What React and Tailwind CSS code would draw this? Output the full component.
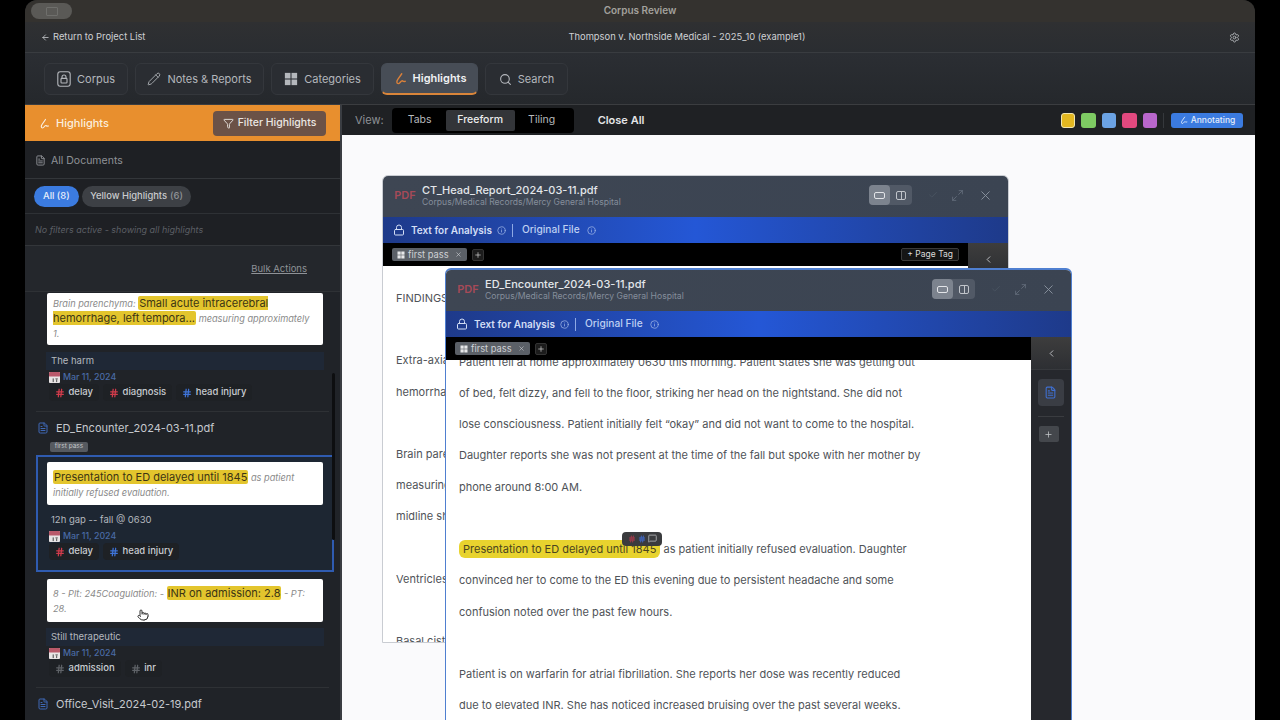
import React from 'react';
import { ArrowLeft, Settings, Lock, Pencil, Search, Filter, FileText, Info, X, Plus, Check, Maximize2, ChevronLeft, Pointer, MessageSquare, Hash } from 'lucide-react';

const HighlightIcon = ({ className }) => (
  <svg viewBox="0 0 24 24" fill="none" stroke="currentColor" strokeWidth="2.4" strokeLinecap="round" strokeLinejoin="round" className={className}>
    <path d="M15 3 8 13c-2 3-2 7 1 7 3 0 4-5 7-5 1 0 1 2 5 1" />
  </svg>
);

const GridIcon = ({ className }) => (
  <svg viewBox="0 0 16 16" fill="currentColor" className={className}>
    <rect x="1" y="1" width="6.4" height="6.4" />
    <rect x="8.6" y="1" width="6.4" height="6.4" />
    <rect x="1" y="8.6" width="6.4" height="6.4" />
    <rect x="8.6" y="8.6" width="6.4" height="6.4" />
  </svg>
);

const CorpusIcon = ({ className }) => (
  <svg viewBox="0 0 14 16" fill="none" stroke="currentColor" strokeWidth="1.1" className={className}>
    <rect x="0.8" y="0.8" width="12.4" height="14.4" rx="2.4" />
    <rect x="4" y="7.4" width="6" height="4.6" rx="0.8" />
    <path d="M5 7.4V6a2 2 0 0 1 4 0v1.4" />
  </svg>
);

const CalendarIcon = () => (
  <svg viewBox="0 0 12 12" className="h-[11px] w-[11px] shrink-0">
    <rect x="0" y="0" width="12" height="12" rx="1" fill="#e8e4e4" />
    <rect x="0" y="0" width="12" height="5" rx="1" fill="#b9596a" />
    <rect x="4" y="7" width="1.2" height="4" fill="#555" />
    <rect x="7" y="7" width="2.6" height="1" fill="#555" />
    <rect x="7.8" y="8" width="1.1" height="3" fill="#555" />
  </svg>
);

const tabs = [
  { label: 'Corpus', icon: <CorpusIcon className="h-[16px] w-[14px]" />, w: 'w-[84px]' },
  { label: 'Notes & Reports', icon: <Pencil className="h-[14px] w-[14px]" strokeWidth={1.5} />, w: 'w-[129px]' },
  { label: 'Categories', icon: <GridIcon className="h-[14px] w-[14px]" />, w: 'w-[103px]' },
  { label: 'Highlights', icon: <HighlightIcon className="h-[14px] w-[14px] text-[#d9803a]" />, w: 'w-[97px]', active: true },
  { label: 'Search', icon: <Search className="h-[13px] w-[13px]" />, w: 'w-[83px]' },
];

const tagColors = { red: 'text-[#d23c4c]', blue: 'text-[#3f74d8]', grey: 'text-[#5f6368]' };

function Tag({ label, color }) {
  return (
    <span className="flex h-[17px] items-center gap-[3.5px] rounded bg-[#1e2125] px-[6px] text-[9.5px] font-medium text-[#c9ccd1]">
      <Hash className={`h-[10px] w-[10px] ${tagColors[color]}`} strokeWidth={3} />
      {label}
    </span>
  );
}

function NoteMeta({ note, tags, noteBg, className }) {
  return (
    <div className={className}>
      <div className={`mx-[10px] flex h-[18px] items-center px-[5px] text-[9.5px] text-[#b4b8be] ${noteBg}`}>{note}</div>
      <div className="ml-[13px] mt-[2px] flex h-[10px] items-center gap-[3px] text-[8.8px] font-medium text-[#4a6ba5]">
        <CalendarIcon />
        Mar 11, 2024
      </div>
      <div className="ml-[13px] mt-[2px] flex gap-[4px]">
        {tags.map((t) => <Tag key={t.label} {...t} />)}
      </div>
    </div>
  );
}

function DocRow({ name }) {
  return (
    <div className="flex h-[20px] items-center gap-[7px] pl-[12px]">
      <FileText className="h-[12px] w-[12px] text-[#3f68b5]" />
      <span className="text-[11px] text-[#c6c9ce]">{name}</span>
    </div>
  );
}

function DocWindow({ className, title, pageTag, children, side }) {
  return (
    <div className={`absolute flex h-[468px] w-[627px] flex-col overflow-hidden rounded-t-md border bg-white ${className}`}>
      <div className="flex h-[41px] shrink-0 items-center bg-gradient-to-r from-[#3e4653] to-[#3b4452] pb-[3px] pl-[10px] pr-[15px]">
        <span className="flex h-[22px] w-[24px] items-center justify-center rounded text-[11px] font-semibold text-[#a64a58]">PDF</span>
        <div className="ml-[5px] flex-1">
          <div className="text-[11px] font-medium leading-[14px] text-[#e3e6ea]">{title}</div>
          <div className="text-[8.6px] leading-[11px] text-[#858e9b]">Corpus/Medical Records/Mercy General Hospital</div>
        </div>
        <div className="flex h-[20px] w-[43px] rounded bg-[#515966]">
          <span className="flex w-[21px] items-center justify-center rounded bg-[#7c838e]">
            <span className="h-[7px] w-[11px] rounded-[2px] border border-[#e2e4e8]" />
          </span>
          <span className="flex flex-1 items-center justify-center">
            <span className="flex h-[9px] w-[10px] justify-center rounded-[2px] border border-[#c0c4ca]">
              <span className="h-full w-px bg-[#c0c4ca]" />
            </span>
          </span>
        </div>
        <Check className="ml-[16px] h-[10px] w-[10px] text-[#4c5563]" />
        <Maximize2 className="ml-[13px] h-[13px] w-[13px] text-[#66707e]" strokeWidth={1.5} />
        <X className="ml-[14px] h-[15px] w-[15px] text-[#8a929e]" strokeWidth={1.5} />
      </div>
      <div className="flex h-[26px] shrink-0 items-center bg-gradient-to-r from-[#1e3a8a] via-[#2457d6] to-[#1e3a8a] pl-[10px] text-[10.2px] font-medium text-[#d3def5]">
        <Lock className="h-[12px] w-[12px]" />
        <span className="ml-[6px] text-[10px] font-semibold">Text for Analysis</span>
        <Info className="ml-[5px] h-[9px] w-[9px] text-[#9db4e6]" />
        <span className="mx-[6px] h-[13px] w-px bg-[#8ea9e4]" />
        <span className="ml-[3px] text-[#bfd0f2]">Original File</span>
        <Info className="ml-[7px] h-[9px] w-[9px] text-[#9db4e6]" />
      </div>
      <div className="flex min-h-0 flex-1">
        <div className="flex min-w-0 flex-1 flex-col">
          <div className="flex h-[23px] shrink-0 items-center bg-black pl-[9px] pr-[9px]">
            <span className="flex h-[13px] items-center gap-[3px] rounded-[2px] bg-[#5b6067] px-[5px] text-[9.3px] text-[#cfd2d6]">
              <GridIcon className="h-[8px] w-[8px] text-[#e6e7e9]" />
              first pass
              <X className="ml-[3px] h-[7px] w-[7px]" />
            </span>
            <span className="ml-[5px] flex h-[12px] w-[12px] items-center justify-center rounded-[2px] border border-[#333] bg-[#1c1c1c]">
              <Plus className="h-[8px] w-[8px] text-[#ddd]" />
            </span>
            {pageTag && (
              <span className="ml-auto flex h-[13px] items-center rounded-[2px] border border-[#3a3a3a] bg-[#151515] px-[5px] text-[8.5px] text-[#dcdcdc]">+ Page Tag</span>
            )}
          </div>
          <div className="min-h-0 flex-1 overflow-hidden text-[11px] leading-[31.3px] text-[#4f5358]">{children}</div>
        </div>
        <div className="flex w-[40px] shrink-0 flex-col items-center bg-[#26282d]">
          <div className="flex h-[33px] w-full items-center justify-center border-b border-[#37393d] bg-gradient-to-b from-[#3d3d3d] to-[#2d2f33]">
            <ChevronLeft className="h-[11px] w-[11px] text-[#c4c6c9]" />
          </div>
          {side && (
            <>
              <span className="mr-[1px] mt-[9px] flex h-[27px] w-[26px] items-center justify-center rounded bg-[#3a3d44]">
                <FileText className="h-[13px] w-[13px] text-[#3f6fd0]" />
              </span>
              <span className="mt-[10px] h-px w-[26px] bg-[#3a3c40]" />
              <span className="mr-[5px] mt-[9px] flex h-[16px] w-[20px] items-center justify-center rounded-[2px] bg-[#44474c]">
                <Plus className="h-[9px] w-[9px] text-[#c6c8cb]" />
              </span>
            </>
          )}
        </div>
      </div>
    </div>
  );
}

const Mark = ({ children }) => (
  <span className="rounded-[2px] bg-[#e3c52d] px-[1px] text-[11px] not-italic text-[#3c3514]">{children}</span>
);

export default function App() {
  return (
    <div className="h-[720px] w-[1280px] overflow-hidden bg-black px-[25px] font-['Inter',sans-serif]">
      <div className="flex h-full flex-col overflow-hidden rounded-t-xl bg-[#1f2124]">
        {/* title bar */}
        <div className="relative flex h-[22px] shrink-0 items-center justify-center bg-[#34322f] pb-[2px] text-[10px] font-semibold text-[#a3a19d]">
          <span className="absolute left-[6px] top-[3px] flex h-[16px] w-[41px] items-center justify-center rounded-full bg-[#5a5956]">
            <span className="h-[9px] w-[12px] rounded-[1px] border border-[#6f6f6c]" />
          </span>
          Corpus Review
        </div>

        {/* project header */}
        <div className="flex h-[31px] shrink-0 items-center border-b border-[#393c40] bg-gradient-to-b from-[#2f3032] to-[#2a2d31] pl-[16px] pr-[15px] pt-[1px] text-[9.4px] text-[#cfd1d4]">
          <div className="flex items-center gap-[3px]">
            <ArrowLeft className="h-[9px] w-[9px]" />
            Return to Project List
          </div>
          <span className="ml-[423px]">Thompson v. Northside Medical - 2025_10 (example1)</span>
          <Settings className="ml-auto h-[11px] w-[11px] text-[#aeb1b5]" />
        </div>

        {/* tabs */}
        <div className="flex h-[52px] shrink-0 items-center gap-[7px] border-b border-[#3b3d40] bg-gradient-to-b from-[#2b2e33] to-[#25282c] pl-[19px] pt-[1px]">
          {tabs.map((t) => (
            <div
              key={t.label}
              className={`flex h-[32px] items-center justify-center gap-[6px] rounded-md border text-[11px] ${t.w} ${
                t.active
                  ? 'border-[#474d56] border-b-2 border-b-[#d9853a] bg-[#474d56] font-semibold text-[#f0f1f3]'
                  : 'border-[#34373c] bg-[#2a2d32] text-[#b4b7bc]'
              }`}
            >
              {t.icon}
              {t.label}
            </div>
          ))}
        </div>

        <div className="flex min-h-0 flex-1">
          {/* sidebar */}
          <div className="flex w-[317px] shrink-0 flex-col border-r-2 border-[#3a3d42] bg-[#1e2024]">
            <div className="flex h-[36px] shrink-0 items-center justify-between bg-[#e88f2e] pl-[13px] pr-[14px]">
              <div className="flex items-center gap-[6px] pt-[1px] text-[11px] font-medium text-[#fbeedd]">
                <HighlightIcon className="h-[12px] w-[12px]" />
                Highlights
              </div>
              <div className="flex h-[25px] w-[113px] items-center justify-center gap-[4px] rounded bg-[#6b5247] text-[10.5px] font-medium text-[#ebe7e3]">
                <Filter className="h-[11px] w-[11px]" />
                Filter Highlights
              </div>
            </div>
            <div className="flex h-[38px] shrink-0 items-center gap-[5px] border-b border-[#33363a] pl-[10px] pt-[2px] text-[10.5px] text-[#8f9297]">
              <FileText className="h-[11px] w-[11px]" />
              All Documents
            </div>
            <div className="flex h-[35px] shrink-0 items-center gap-[3px] border-b border-[#2e3135] pl-[9px] text-[9.4px] font-medium">
              <span className="flex h-[21px] items-center rounded-full bg-[#3b7be0] px-[9px] text-[#e7eefb]">All (8)</span>
              <span className="flex h-[21px] items-center gap-[3px] rounded-full bg-[#3d4045] px-[8.5px] text-[#c9cbce]">
                Yellow Highlights <span className="text-[#8f9297]">(6)</span>
              </span>
            </div>
            <div className="flex h-[32px] shrink-0 items-center border-b border-[#33363a] pl-[10px] text-[9px] italic text-[#5c5f64]">
              No filters active - showing all highlights
            </div>
            <div className="flex h-[46px] shrink-0 items-center justify-end border-b border-[#2e3135] bg-[#24272c] pr-[33px] pt-[1px]">
              <span className="text-[9.5px] text-[#8f9297] underline">Bulk Actions</span>
            </div>

            <div className="relative min-h-0 flex-1 overflow-hidden bg-[#202328]">
              <span className="absolute right-[5px] top-[81px] h-[167px] w-[3px] rounded bg-[#0d0e10]" />

              <div className="ml-[22px] mr-[17px] mt-px h-[52px] rounded-[2px] bg-white px-[6px] pt-[3px] text-[9.2px] italic leading-[15px] text-[#8a8a8a]">
                Brain parenchyma: <Mark>Small acute intracerebral hemorrhage, left tempora...</Mark> measuring approximately 1.
              </div>
              <NoteMeta
                className="ml-[11px] mr-[6px] mt-[7px]"
                note="The harm"
                noteBg="bg-[#1f2836]"
                tags={[
                  { label: 'delay', color: 'red' },
                  { label: 'diagnosis', color: 'red' },
                  { label: 'head injury', color: 'blue' },
                ]}
              />

              <div className="mx-[11px] mt-[10px] border-t border-[#2e3135] pt-[6px]">
                <div className="-ml-[11px]"><DocRow name="ED_Encounter_2024-03-11.pdf" /></div>
              </div>
              <span className="ml-[25px] mt-[4px] flex h-[10px] w-[38px] items-center justify-center rounded-[2px] bg-[#565a60] text-[6.5px] text-[#c3c5c8]">first pass</span>

              <div className="ml-[11px] mr-[6px] mt-[3px] h-[117px] border-2 border-[#2f5bb0] bg-[#1d2632] pt-[5px]">
                <div className="ml-[9px] mr-[9px] h-[43px] rounded-[2px] bg-white px-[6px] pt-[8px] text-[9.2px] italic leading-[15px] text-[#8a8a8a]">
                  <Mark>Presentation to ED delayed until 1845</Mark> as patient initially refused evaluation.
                </div>
                <NoteMeta
                  className="-ml-[2px] mt-[6px]"
                  note="12h gap -- fall @ 0630"
                  noteBg=""
                  tags={[
                    { label: 'delay', color: 'red' },
                    { label: 'head injury', color: 'blue' },
                  ]}
                />
              </div>

              <div className="ml-[22px] mr-[17px] mt-[7px] h-[43px] rounded-[2px] bg-white px-[6px] pt-[7px] text-[9.2px] italic leading-[15px] text-[#8a8a8a]">
                8 - Plt: 245Coagulation: - <Mark>INR on admission: 2.8</Mark> - PT: 28.
              </div>
              <NoteMeta
                className="ml-[11px] mr-[6px] mt-[6px]"
                note="Still therapeutic"
                noteBg="bg-[#1f2836]"
                tags={[
                  { label: 'admission', color: 'grey' },
                  { label: 'inr', color: 'grey' },
                ]}
              />
              <div className="mx-[11px] mt-[10px] border-t border-[#2e3135] pt-[6px]">
                <div className="-ml-[11px]"><DocRow name="Office_Visit_2024-02-19.pdf" /></div>
              </div>

              <Pointer className="absolute left-[112px] top-[317px] h-[12px] w-[12px] fill-white text-[#333]" />
            </div>
          </div>

          {/* viewer */}
          <div className="flex min-w-0 flex-1 flex-col">
            <div className="flex h-[30px] shrink-0 items-center bg-[#1f2124] pl-[13px] pr-[12px]">
              <span className="text-[11px] text-[#8e9196]">View:</span>
              <div className="ml-[8px] flex h-[25px] w-[182px] items-center rounded bg-black px-[2px] text-[10.5px] text-[#b8babd]">
                <span className="flex w-[52px] justify-center">Tabs</span>
                <span className="flex h-[21px] w-[69px] items-center justify-center rounded-[2px] bg-[#333539] font-medium text-[#eceded]">Freeform</span>
                <span className="flex w-[54px] justify-center">Tiling</span>
              </div>
              <span className="ml-[24px] text-[11px] font-semibold text-[#e4e5e7]">Close All</span>
              <div className="ml-auto flex items-center gap-[6px]">
                <span className="h-[15px] w-[14.5px] rounded-[3px] border border-[#f1e6b0] bg-[#e3b821]" />
                <span className="h-[15px] w-[14.5px] rounded-[3px] bg-[#7ecb63]" />
                <span className="h-[15px] w-[14.5px] rounded-[3px] bg-[#6ba3e4]" />
                <span className="h-[15px] w-[14.5px] rounded-[3px] bg-[#e2497f]" />
                <span className="h-[15px] w-[14.5px] rounded-[3px] bg-[#b866cc]" />
                <span className="h-[15px] w-px bg-[#35383c]" />
                <span className="ml-[1px] flex h-[15px] w-[72px] items-center justify-center gap-[3px] rounded-[3px] bg-[#3b7be0] text-[8.5px] font-medium text-[#e4edfb]">
                  <HighlightIcon className="h-[9px] w-[9px]" />
                  Annotating
                </span>
              </div>
            </div>

            {/* free canvas */}
            <div className="relative min-h-0 flex-1 overflow-hidden bg-[#fafafc]">
              <DocWindow className="left-[40px] top-[40px] border-[#c9ccd2]" title="CT_Head_Report_2024-03-11.pdf" pageTag>
                <div className="pl-[13px] pt-[17px]">
                  <p>FINDINGS:</p>
                  <p className="mt-[31px]">Extra-axial spaces: No subdural hematoma.</p>
                  <p>hemorrhage is identified.</p>
                  <p className="mt-[31px]">Brain parenchyma: Small acute intracerebral</p>
                  <p>measuring approximately 1.</p>
                  <p>midline shift is present.</p>
                  <p className="mt-[31px]">Ventricles and sulci are normal.</p>
                  <p className="mt-[31px]">Basal cisterns are patent.</p>
                </div>
              </DocWindow>

              <DocWindow className="left-[103px] top-[133px] border-[#4f7fd0] border-t-2" title="ED_Encounter_2024-03-11.pdf" side>
                <div className="relative -mt-[13.5px] pl-[13px]">
                  <p>Patient fell at home approximately 0630 this morning. Patient states she was getting out</p>
                  <p>of bed, felt dizzy, and fell to the floor, striking her head on the nightstand. She did not</p>
                  <p>lose consciousness. Patient initially felt “okay” and did not want to come to the hospital.</p>
                  <p>Daughter reports she was not present at the time of the fall but spoke with her mother by</p>
                  <p>phone around 8:00 AM.</p>
                  <p className="mt-[31px]">
                    <span className="rounded-md bg-[#e8d32e] px-[4px] py-[2px] text-[#4a4520]">Presentation to ED delayed until 1845</span>
                    {' '}as patient initially refused evaluation. Daughter
                  </p>
                  <p>convinced her to come to the ED this evening due to persistent headache and some</p>
                  <p>confusion noted over the past few hours.</p>
                  <p className="mt-[31px]">Patient is on warfarin for atrial fibrillation. She reports her dose was recently reduced</p>
                  <p>due to elevated INR. She has noticed increased bruising over the past several weeks.</p>
                  {/* hover toolbar on the highlight */}
                  <span className="absolute left-[176px] top-[185px] flex h-[14px] w-[40px] items-center justify-center gap-[2px] rounded bg-[#3a3b3e]">
                    <Hash className="h-[8px] w-[8px] text-[#a8384a]" strokeWidth={3} />
                    <Hash className="h-[8px] w-[8px] text-[#3f68c8]" strokeWidth={3} />
                    <MessageSquare className="h-[9px] w-[9px] text-[#c2c3c5]" />
                  </span>
                </div>
              </DocWindow>
            </div>
          </div>
        </div>
      </div>
    </div>
  );
}
